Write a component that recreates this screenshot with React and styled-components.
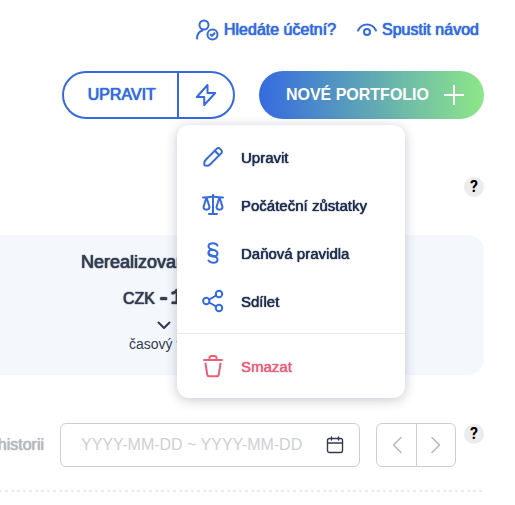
import React from "react";
import styled, { createGlobalStyle, css } from "styled-components";

const blue = "#356ae0";
const navy = "#1f2f50";
const ink = "#343b50";
const red = "#ec5f78";

const GlobalStyle = createGlobalStyle`
  * { box-sizing: border-box; }
  body {
    margin: 0;
    background: #fff;
    font-family: "Liberation Sans", Arial, sans-serif;
    font-size: 16px;
    color: ${ink};
    overflow-x: hidden;
  }
  button, input { font: inherit; color: inherit; }
  button { background: none; border: 0; padding: 0; cursor: pointer; }
  svg { display: block; flex: none; }
`;

const medium = css`
  text-shadow: 0 0 1px currentColor, 0 0 1px currentColor;
`;

const Page = styled.main`
  display: flex;
  flex-direction: column;
  padding: 18px 31px 13px 0;
`;

const TopLinks = styled.nav`
  display: grid;
  grid-template-columns: minmax(144px, auto) minmax(127px, auto);
  justify-content: flex-end;
  gap: 18px;
`;

const TopLink = styled.a`
  display: flex;
  align-items: center;
  gap: 5px;
  color: ${blue};
  line-height: 22px;
  text-decoration: none;
  white-space: nowrap;
  ${medium}
`;

const Actions = styled.div`
  display: flex;
  justify-content: flex-end;
  gap: 24px;
  margin-top: 29px;
`;

const SplitButton = styled.div`
  display: flex;
  height: 48px;
  border: 2px solid ${blue};
  border-radius: 24px;
  color: ${blue};
`;

const EditButton = styled.button`
  padding: 0 21px 0 24px;
  ${medium}
`;

const MenuAnchor = styled.div`
  position: relative;
  display: flex;
  border-left: 2px solid ${blue};
`;

const QuickButton = styled.button`
  display: grid;
  place-items: center;
  width: 54px;
`;

const NewButton = styled.button`
  display: flex;
  align-items: center;
  gap: 15px;
  height: 48px;
  padding: 0 20px 0 27px;
  border-radius: 24px;
  background: linear-gradient(90deg, #356ae0, #8de788);
  color: #fff;
  font-weight: 700;
  white-space: nowrap;
`;

const Menu = styled.ul`
  position: absolute;
  z-index: 5;
  top: calc(100% + 8px);
  left: -2px;
  width: 228px;
  margin: 0;
  padding: 8px 0;
  list-style: none;
  border-radius: 12px;
  background: #fff;
  box-shadow: 0 2px 12px rgba(30, 40, 80, 0.25);
  will-change: transform;
`;

const MenuDivider = styled.li`
  height: 1px;
  margin: 8px 0;
  background: #e6e8ea;
`;

const MenuItem = styled.button`
  display: flex;
  align-items: center;
  gap: 16px;
  width: 100%;
  height: 48px;
  padding: 0 24px;
  font-size: 15px;
  white-space: nowrap;
  color: ${(p) => (p.$danger ? red : navy)};
  ${medium}

  svg { color: ${(p) => (p.$danger ? red : blue)}; }
`;

const Help = styled.button`
  flex: none;
  width: 20px;
  height: 20px;
  border-radius: 50%;
  background: #ececed;
  color: #000;
  font: 700 16px/20px Roboto, sans-serif;
  text-align: center;
`;

const HelpRow = styled.div`
  display: flex;
  justify-content: flex-end;
  margin-top: 58px;
`;

const Summary = styled.section`
  display: flex;
  height: 140px;
  margin-top: 38px;
  padding: 16px 0 0 81px;
  border-radius: 0 16px 16px 0;
  background: #f4f8fd;
`;

const Stat = styled.div`
  display: flex;
  flex-direction: column;
  align-items: center;
  width: 166px;
`;

const StatTitle = styled.h2`
  align-self: flex-start;
  margin: 0;
  font-size: 18px;
  font-weight: 400;
  line-height: 22px;
  white-space: nowrap;
  ${medium}
`;

const Amount = styled.div`
  display: flex;
  align-items: baseline;
  align-self: flex-start;
  gap: 2px;
  margin: 12px 0 0 42px;
  line-height: 28px;
  ${medium}
`;

const Digits = styled.strong`
  font-family: "Liberation Mono", monospace;
  font-size: 22px;
`;

const StatNote = styled.span`
  margin-top: 6px;
  font-size: 14px;
  line-height: 16px;
`;

const StatChevron = styled.div`
  margin-top: 8px;
`;

const Filters = styled.div`
  display: flex;
  justify-content: flex-end;
  margin-top: 48px;
`;

const FilterLabel = styled.label`
  align-self: center;
  margin-right: 16px;
  color: #b5b8be;
  white-space: nowrap;
  ${medium}
`;

const DateField = styled.div`
  display: flex;
  flex: none;
  align-items: center;
  width: 300px;
  height: 44px;
  margin-right: 16px;
  padding: 0 15px 0 20px;
  border: 1px solid #ccced4;
  border-radius: 6px;
`;

const DateInput = styled.input`
  flex: 1;
  min-width: 0;
  padding: 0;
  border: 0;
  outline: 0;
  background: none;

  &::placeholder { color: #cdd0d6; opacity: 1; }
`;

const Pager = styled.div`
  display: flex;
  flex: none;
  margin-right: 8px;
  border: 1px solid #ccced4;
  border-radius: 6px;
`;

const PagerButton = styled.button`
  display: grid;
  place-items: center;
  width: 39px;
  color: #b4b7c3;

  & + & { border-left: 1px solid #ccced4; }
`;

const FilterHelp = styled.div`
  padding-top: 1px;
`;

const DashedRule = styled.hr`
  width: 100%;
  height: 2px;
  margin: 23px 0 0;
  border: 0;
  background: repeating-linear-gradient(90deg, #ebebec 0 2px, transparent 2px 5px, #ebebec 5px 6px);
`;

const Icon = ({ size = 24, width = 2, children }) => (
  <svg
    width={size}
    height={size}
    viewBox="0 0 24 24"
    fill="none"
    stroke="currentColor"
    strokeWidth={width}
    strokeLinecap="round"
    strokeLinejoin="round"
    aria-hidden="true"
  >
    {children}
  </svg>
);

const AccountantIcon = () => (
  <Icon>
    <circle cx="9" cy="7" r="4.5" />
    <path d="M2 20.5c0-4 2-6.800 5.500-8" />
    <circle cx="17.500" cy="16.500" r="5" />
    <path d="m15.600 16.600 1.400 1.300 2.500-2.600" />
  </Icon>
);

const EyeIcon = () => (
  <svg width="20" height="14" viewBox="0 0 20 14" fill="none" stroke="currentColor" strokeWidth="2" strokeLinecap="round" aria-hidden="true">
    <path d="M1 7.500C3 3.500 6.200 1.500 10 1.500s7 2 9 6" />
    <circle cx="10" cy="9" r="3" />
  </svg>
);

const BoltIcon = () => (
  <Icon>
    <path d="M13.500 2 2.800 14h7.400v8L21.200 10h-7.700z" />
  </Icon>
);

const PlusIcon = () => (
  <svg width="20" height="20" viewBox="0 0 20 20" stroke="currentColor" strokeWidth="2" aria-hidden="true">
    <path d="M10 0v20M0 10h20" />
  </svg>
);

const PencilIcon = () => (
  <Icon>
    <path d="M3.600 20.400c-.6-1.900-.2-4.300 1.200-5.700L15.600 3.900c1.100-1.100 2.500-1.100 3.500 0l1 1c1.100 1.100 1.100 2.500 0 3.500L9.300 19.200c-1.400 1.400-3.800 1.900-5.700 1.200z" />
    <path d="m13.800 5.800 4.500 4.500" />
  </Icon>
);

const ScalesIcon = () => (
  <Icon>
    <path d="M12 2v19M8 21h8M2 4.500c4 0 6-.2 10-1 4 .8 6 1 10 1" />
    <path d="M5.300 5 2.500 14c.2 3.500 5.800 3.500 6 0L5.700 5M18.300 5l-2.800 9c.2 3.500 5.800 3.500 6 0l-2.800-9" />
  </Icon>
);

const ParagraphIcon = () => (
  <Icon>
    <path d="M16.500 4.500c-.9-1.500-2.300-2.300-4.500-2.300-2.600 0-4.500 1.200-4.500 3.200 0 4.100 9 2.600 9 6.800 0 2-1.900 3.200-4.500 3.200S7.500 14 7.500 12 9.400 8.800 12 8.800" />
    <path d="M7.500 12c0 3.200 9 2.400 9 6.400 0 2-1.900 3.300-4.500 3.300-2.200 0-3.600-.8-4.500-2.200" />
  </Icon>
);

const ShareIcon = () => (
  <Icon>
    <circle cx="5.300" cy="12" r="3.200" />
    <circle cx="18" cy="5" r="3.200" />
    <circle cx="18" cy="19" r="3.200" />
    <path d="m8.200 10.500 6.800-3.800M8.200 13.500l6.800 3.800" />
  </Icon>
);

const TrashIcon = () => (
  <Icon>
    <path d="M3 6h18" />
    <path d="M8.500 5.500V4c0-1.300.7-2 2-2h3c1.300 0 2 .7 2 2v1.500" />
    <path d="m4.500 9.500 1.700 11c.2 1.200.9 1.800 2 1.800h7.600c1.100 0 1.800-.6 2-1.800l1.700-11" />
  </Icon>
);

const CalendarIcon = () => (
  <svg width="18" height="18" viewBox="0 0 18 18" fill="none" stroke={ink} strokeWidth="1.400" strokeLinecap="round" aria-hidden="true">
    <rect x="1.500" y="2.500" width="15" height="14" rx="2" />
    <path d="M1.500 7h15M5.500 1v3M12.500 1v3" />
  </svg>
);

const Chevron = ({ d }) => (
  <svg width="10" height="18" viewBox="0 0 10 18" fill="none" stroke="currentColor" strokeWidth="1.500" strokeLinecap="round" strokeLinejoin="round" aria-hidden="true">
    <path d={d} />
  </svg>
);

const menuItems = [
  { label: "Upravit", icon: PencilIcon },
  { label: "Počáteční zůstatky", icon: ScalesIcon },
  { label: "Daňová pravidla", icon: ParagraphIcon },
  { label: "Sdílet", icon: ShareIcon },
];

export default function App() {
  return (
    <>
      <GlobalStyle />
      <Page>
        <TopLinks>
          <TopLink href="#ucetni">
            <AccountantIcon />
            Hledáte účetní?
          </TopLink>
          <TopLink href="#navod">
            <EyeIcon />
            Spustit návod
          </TopLink>
        </TopLinks>

        <Actions>
          <SplitButton>
            <EditButton type="button">UPRAVIT</EditButton>
            <MenuAnchor>
              <QuickButton type="button" aria-label="Další akce" aria-expanded="true">
                <BoltIcon />
              </QuickButton>
              <Menu>
                {menuItems.map(({ label, icon: ItemIcon }) => (
                  <li key={label}>
                    <MenuItem type="button">
                      <ItemIcon />
                      {label}
                    </MenuItem>
                  </li>
                ))}
                <MenuDivider role="separator" />
                <li>
                  <MenuItem type="button" $danger>
                    <TrashIcon />
                    Smazat
                  </MenuItem>
                </li>
              </Menu>
            </MenuAnchor>
          </SplitButton>
          <NewButton type="button">
            NOVÉ PORTFOLIO
            <PlusIcon />
          </NewButton>
        </Actions>

        <HelpRow>
          <Help type="button">?</Help>
        </HelpRow>

        <Summary>
          <Stat>
            <StatTitle>Nerealizovaný</StatTitle>
            <Amount>
              CZK<Digits>-1</Digits>
            </Amount>
            <StatChevron>
              <svg width="14" height="9" viewBox="0 0 14 9" fill="none" stroke={ink} strokeWidth="2" strokeLinecap="round" strokeLinejoin="round" aria-hidden="true">
                <path d="m1.500 1.500 5.500 5.500 5.500-5.500" />
              </svg>
            </StatChevron>
            <StatNote>časový test</StatNote>
          </Stat>
        </Summary>

        <Filters>
          <FilterLabel htmlFor="range">historii</FilterLabel>
          <DateField>
            <DateInput id="range" placeholder="YYYY-MM-DD ~ YYYY-MM-DD" />
            <CalendarIcon />
          </DateField>
          <Pager>
            <PagerButton type="button" aria-label="Předchozí">
              <Chevron d="M9 1.500 1.500 9 9 16.500" />
            </PagerButton>
            <PagerButton type="button" aria-label="Další">
              <Chevron d="M1 1.500 8.500 9 1 16.500" />
            </PagerButton>
          </Pager>
          <FilterHelp>
            <Help type="button">?</Help>
          </FilterHelp>
        </Filters>
        <DashedRule />
      </Page>
    </>
  );
}
